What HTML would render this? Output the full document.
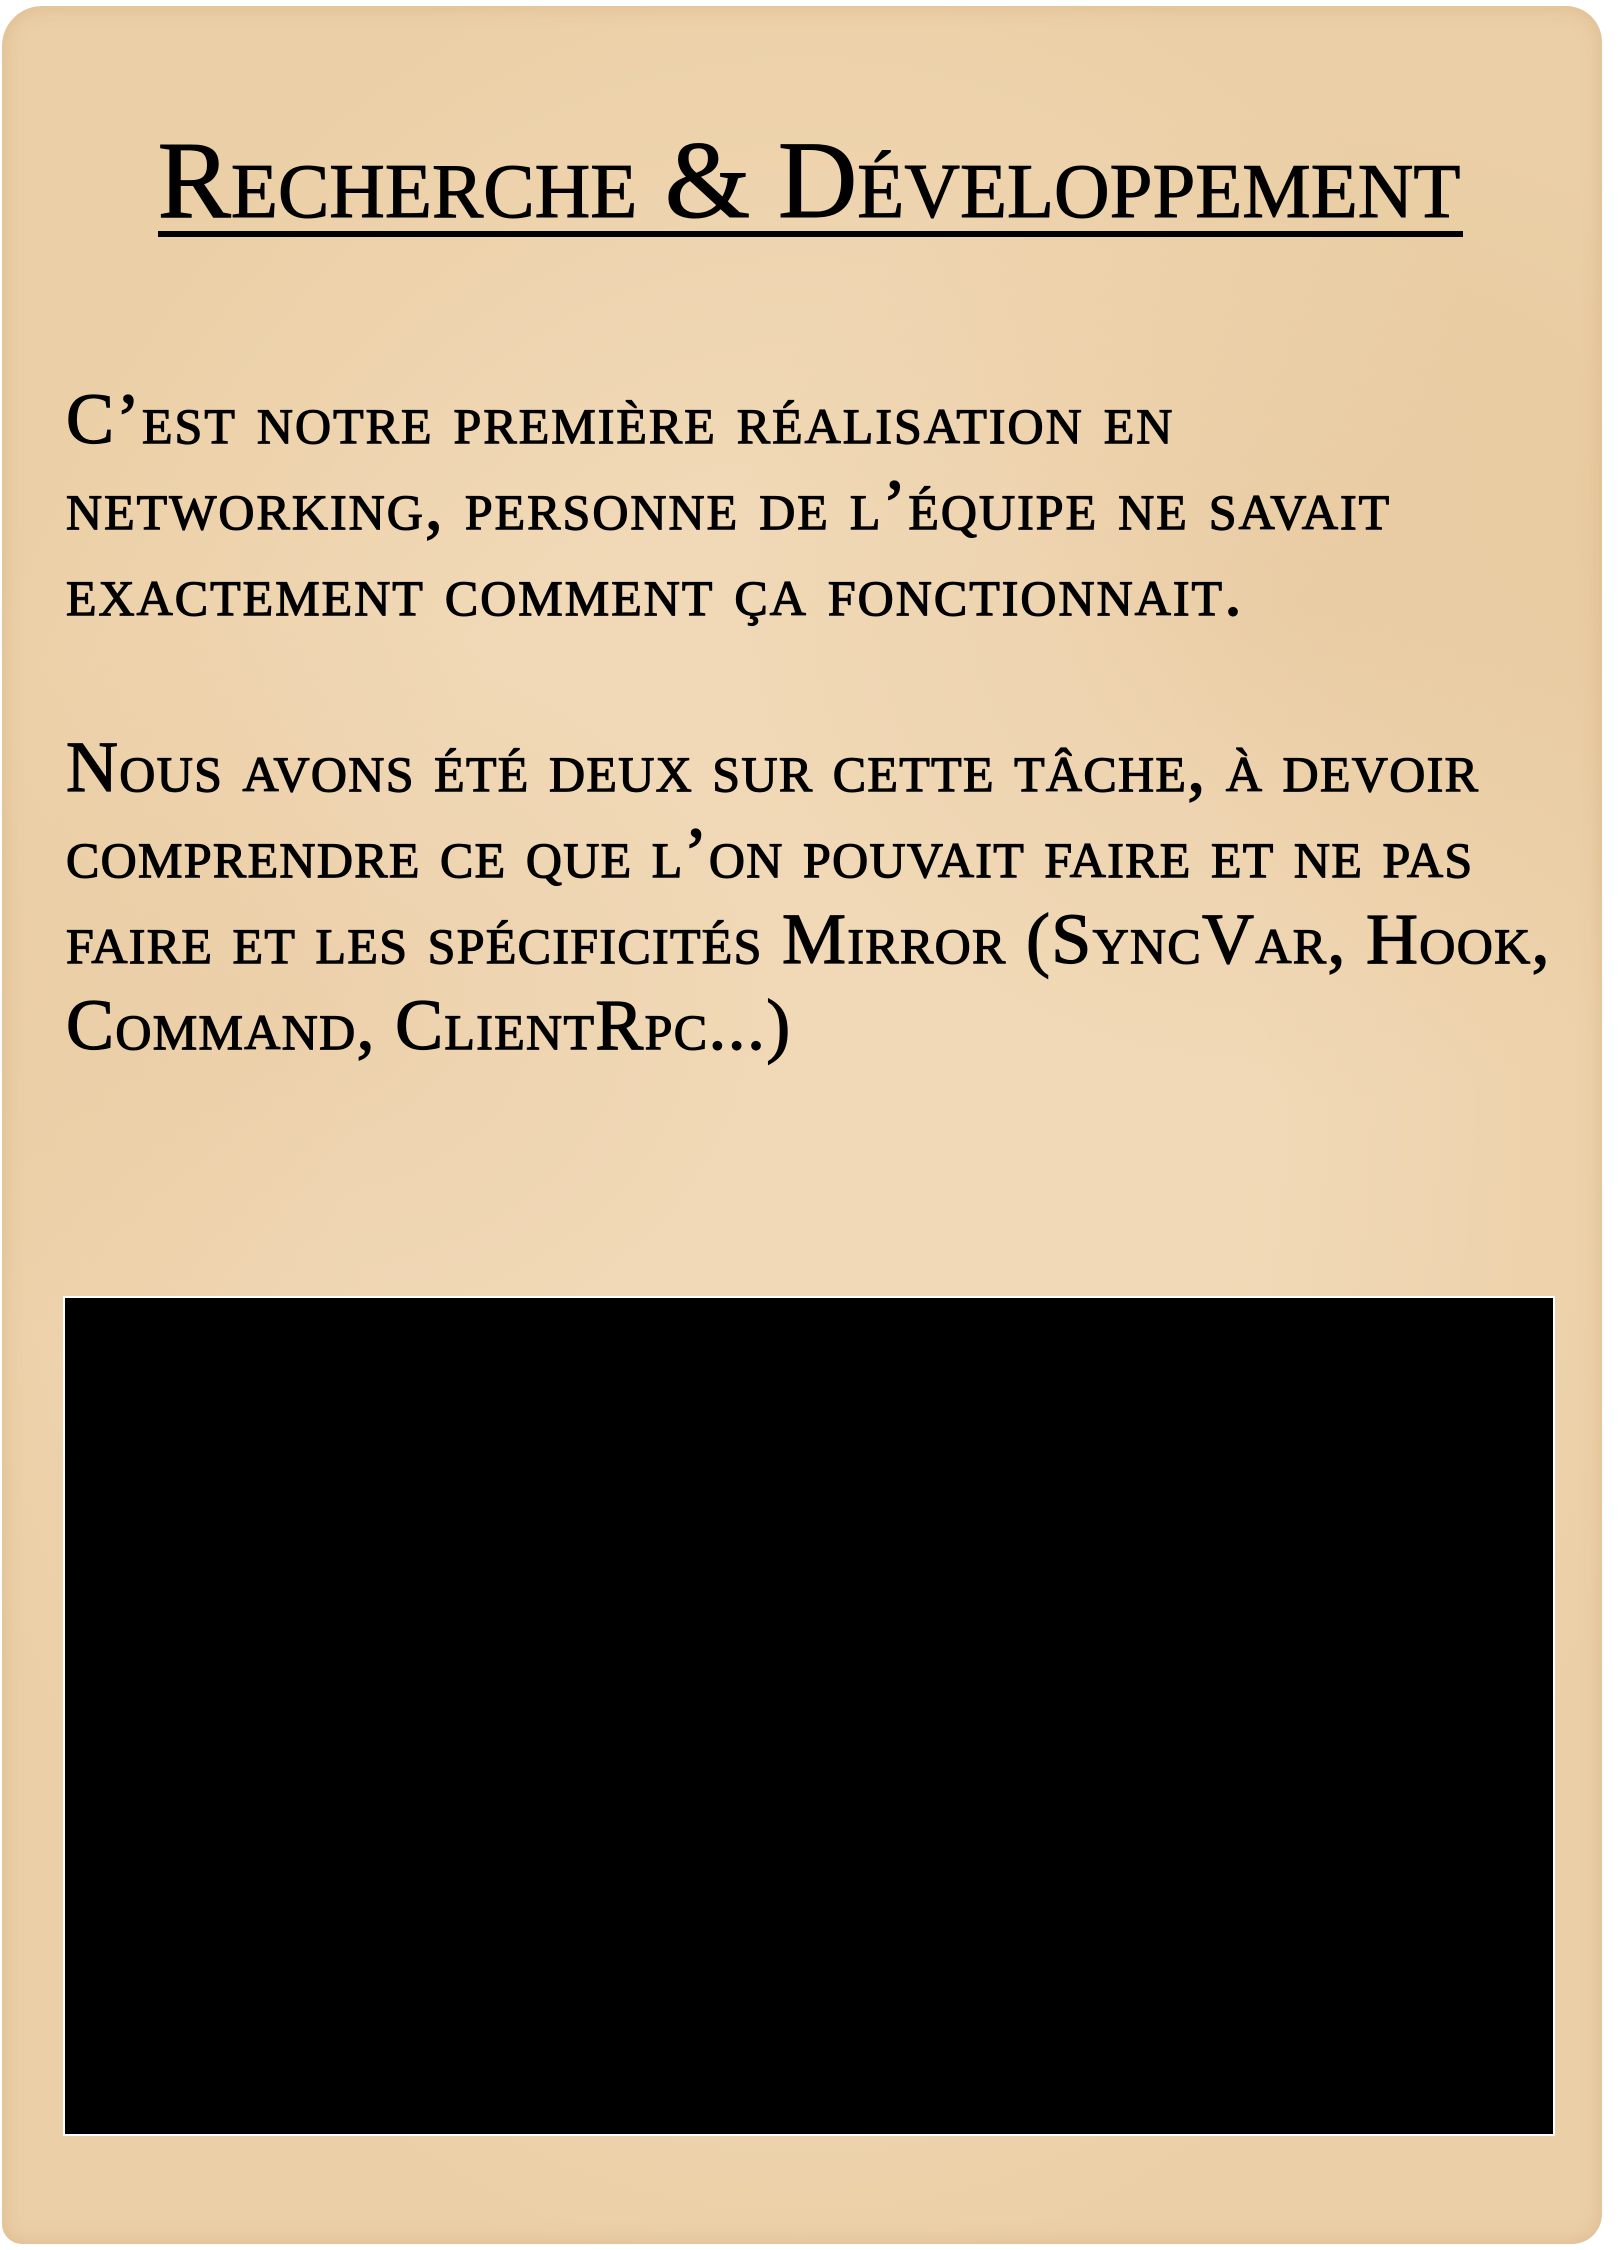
<!DOCTYPE html>
<html><head><meta charset="utf-8"><style>
html,body{margin:0;padding:0;background:#fff;}
body{width:1618px;height:2250px;position:relative;overflow:hidden;}
.paper{position:absolute;left:2px;top:6px;width:1600px;height:2238px;border-radius:40px 36px 30px 20px;
background:
radial-gradient(ellipse 500px 400px at 300px 1000px, rgba(215,170,120,.18), transparent),
radial-gradient(ellipse 600px 500px at 1300px 600px, rgba(210,165,110,.18), transparent),
radial-gradient(ellipse 900px 1200px at 800px 1100px, #f1d9b7 50%, #ebcfa6 100%);
box-shadow:inset 0 0 20px rgba(190,140,90,.3);}
.t{position:absolute;left:0;width:1618px;text-align:center;top:115px;font-family:"Liberation Serif",serif;font-variant:small-caps;font-size:110px;line-height:130px;color:#000;white-space:nowrap;letter-spacing:0;-webkit-text-stroke:1px #000;}
.ul{position:absolute;left:158px;width:1305px;top:231px;height:6px;background:#000;}
.p{position:absolute;left:66px;font-family:"Liberation Serif",serif;font-variant:small-caps;font-size:72px;line-height:86px;color:#000;white-space:nowrap;letter-spacing:2px;-webkit-text-stroke:1.2px #000;}
.box{position:absolute;left:63px;top:1296px;width:1488px;height:836px;background:#000;border:2px solid #fff;}
</style></head><body>
<div class="paper"></div>
<div class="t">Recherche &amp; Développement</div>
<div class="ul"></div>
<div class="p" style="top:376px">C’est notre première réalisation en<br>networking, personne de l’équipe ne savait<br>exactement comment ça fonctionnait.</div>
<div class="p" style="top:724px;letter-spacing:1.3px">Nous avons été deux sur cette tâche, à devoir<br>comprendre ce que l’on pouvait faire et ne pas<br>faire et les spécificités Mirror (SyncVar, Hook,<br>Command, ClientRpc...)</div>
<div class="box"></div>
</body></html>
